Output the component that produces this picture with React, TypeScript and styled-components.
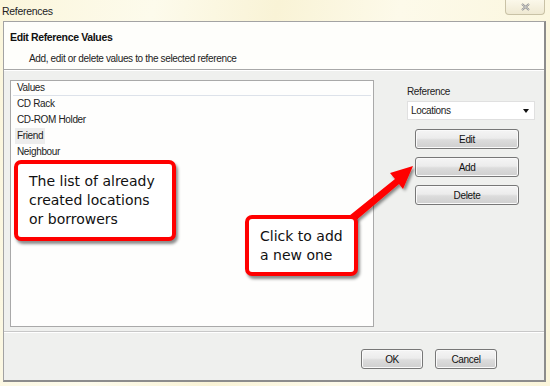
import React from "react";
import styled, { createGlobalStyle } from "styled-components";

const Global = createGlobalStyle`
  html, body { margin: 0; padding: 0; }
  body {
    width: 550px; height: 386px; overflow: hidden;
    background: linear-gradient(100deg, #fbf6dc 0%, #fdfbec 25%, #f9f3d6 45%, #fdfaea 65%, #faf5da 100%);
    font-family: "Liberation Sans", Arial, sans-serif;
    letter-spacing: -0.35px;
  }
`;

const Win = styled.div`
  position: relative;
  width: 550px;
  height: 386px;
  box-sizing: border-box;
`;

const TitleBar = styled.div`
  height: 21px;
  display: flex;
  align-items: flex-start;
  justify-content: space-between;
`;

const Title = styled.div`
  font-size: 10.5px;
  letter-spacing: -0.3px;
  color: #222;
  padding: 5px 0 0 2px;
`;

const CloseBtn = styled.div`
  width: 38px;
  height: 14px;
  margin-right: 5px;
  border: 1px solid #c9c2a6;
  border-top: none;
  border-radius: 0 0 4px 4px;
  background: linear-gradient(#fbf8ea, #efe9d2);
  display: flex;
  align-items: center;
  justify-content: center;
`;

const Dialog = styled.div`
  margin-left: 3px;
  width: 543px;
  height: 361px;
  box-sizing: border-box;
  border: 1px solid #a3a3a3;
  border-right: 2px solid #8c8c8c;
  border-bottom: 2px solid #8c8c8c;
  background: #eff0ee;
  display: flex;
  flex-direction: column;
`;

const Header = styled.div`
  height: 48px;
  background: #fefefb;
  border-bottom: 1px solid #a8a8a8;
  box-sizing: border-box;
  padding: 9px 0 0 6px;
`;

const HeadTitle = styled.div`
  font-weight: bold;
  font-size: 10.5px;
  color: #111;
`;

const HeadSub = styled.div`
  font-size: 10px;
  color: #222;
  margin: 10px 0 0 19px;
`;

const Body = styled.div`
  display: flex;
  height: 262px;
  box-sizing: border-box;
  padding: 9px 0 0 6px;
  border-top: 1px solid #fff;
  border-bottom: 1px solid #c8c8c8;
`;

const ListBox = styled.div`
  width: 364px;
  height: 247px;
  box-sizing: border-box;
  background: #fefefd;
  border: 1px solid #a9a9a9;
  padding: 1px 2px;
`;

const ListHead = styled.div`
  height: 13px;
  font-size: 10px;
  color: #222;
  padding-left: 4px;
  border-bottom: 1px solid #dde2ea;
  line-height: 12px;
`;

const Item = styled.div<{ $sel?: boolean }>`
  height: 16px;
  line-height: 16px;
  font-size: 10px;
  color: #222;
  padding: 0 2px;
  margin-left: 2px;
  display: table;
  background: ${p => (p.$sel ? "#ededed" : "transparent")};
`;

const Side = styled.div`
  margin-left: 33px;
  width: 128px;
  display: flex;
  flex-direction: column;
  padding-top: 6px;
`;

const Label = styled.div`
  font-size: 10px;
  color: #222;
  height: 13px;
`;

const Select = styled.div`
  margin-top: 2px;
  height: 19px;
  box-sizing: border-box;
  background: #fff;
  border: 1px solid #e0e0e0;
  display: flex;
  align-items: center;
  justify-content: space-between;
  padding: 0 5px 0 3px;
  font-size: 10px;
  color: #222;
`;

const Caret = styled.div`
  width: 0; height: 0;
  border-left: 3.5px solid transparent;
  border-right: 3.5px solid transparent;
  border-top: 4px solid #111;
  margin-top: 1px;
`;

const Btns = styled.div`
  display: flex;
  flex-direction: column;
  gap: 8px;
  margin: 9px 0 0 8px;
`;

const Btn = styled.div<{ $w: number }>`
  width: ${p => p.$w}px;
  height: 20px;
  box-sizing: border-box;
  border: 1px solid #777;
  border-radius: 3px;
  background: linear-gradient(#f5f5f5 0%, #ececec 45%, #dcdcdc 55%, #cfcfcf 100%);
  box-shadow: inset 0 0 0 1px #fafafa;
  font-size: 10px;
  color: #111;
  display: flex;
  align-items: center;
  justify-content: center;
`;

const Footer = styled.div`
  flex: 1;
  border-top: 1px solid #fff;
  display: flex;
  justify-content: flex-end;
  align-items: flex-start;
  gap: 12px;
  padding: 16px 47px 0 0;
`;

const Callout = styled.div<{ $x: number; $y: number; $w: number; $h: number }>`
  position: absolute;
  left: ${p => p.$x}px;
  top: ${p => p.$y}px;
  width: ${p => p.$w}px;
  height: ${p => p.$h}px;
  box-sizing: border-box;
  border: 4px solid #f00;
  border-radius: 7px;
  background: #fff;
  box-shadow: 2px 3px 3px rgba(0,0,0,0.45);
  font-family: "DejaVu Sans", Verdana, sans-serif;
  letter-spacing: 0;
  font-size: 14px;
  line-height: 19px;
  color: #111;
  padding: 8px 0 0 11px;
  z-index: 2;
`;

const ArrowSvg = styled.svg`
  position: absolute;
  left: 0;
  top: 0;
  z-index: 1;
  pointer-events: none;
`;

export default function App() {
  return (
    <>
      <Global />
      <Win>
        <TitleBar>
          <Title>References</Title>
          <CloseBtn>
            <svg width="9" height="8" viewBox="0 0 9 8">
              <path d="M1 1 L8 7 M8 1 L1 7" stroke="#8a8a8a" strokeWidth="2" fill="none" />
              <path d="M1 1 L8 7 M8 1 L1 7" stroke="#eeeeee" strokeWidth="0.7" fill="none" />
            </svg>
          </CloseBtn>
        </TitleBar>
        <Dialog>
          <Header>
            <HeadTitle>Edit Reference Values</HeadTitle>
            <HeadSub>Add, edit or delete values to the selected reference</HeadSub>
          </Header>
          <Body>
            <ListBox>
              <ListHead>Values</ListHead>
              <Item>CD Rack</Item>
              <Item>CD-ROM Holder</Item>
              <Item $sel>Friend</Item>
              <Item>Neighbour</Item>
            </ListBox>
            <Side>
              <Label>Reference</Label>
              <Select>
                <span>Locations</span>
                <Caret />
              </Select>
              <Btns>
                <Btn $w={104}>Edit</Btn>
                <Btn $w={104}>Add</Btn>
                <Btn $w={104}>Delete</Btn>
              </Btns>
            </Side>
          </Body>
          <Footer>
            <Btn $w={62}>OK</Btn>
            <Btn $w={62}>Cancel</Btn>
          </Footer>
        </Dialog>
        <ArrowSvg width="550" height="386" viewBox="0 0 550 386">
          <defs>
            <filter id="sh" x="-20%" y="-20%" width="140%" height="140%">
              <feDropShadow dx="2" dy="2" stdDeviation="1.5" floodColor="#000" floodOpacity="0.45" />
            </filter>
          </defs>
          <g filter="url(#sh)">
            <path d="M349 216 L395 179 L390 173 L413 166 L403 189 L399 184 L354 222 Z" fill="#f00" />
          </g>
        </ArrowSvg>
        <Callout $x={14} $y={160} $w={162} $h={81}>
          The list of already<br />created locations<br />or borrowers
        </Callout>
        <Callout $x={245} $y={215} $w={113} $h={61}>
          Click to add<br />a new one
        </Callout>
      </Win>
    </>
  );
}
